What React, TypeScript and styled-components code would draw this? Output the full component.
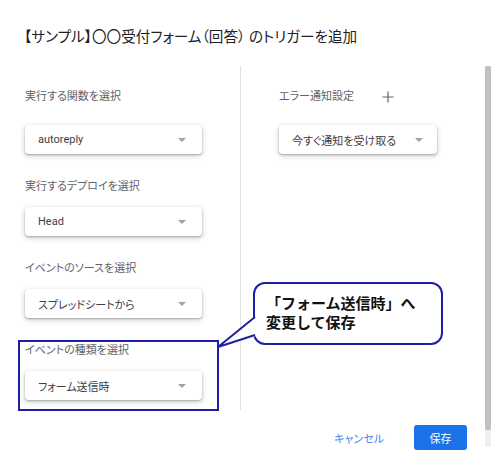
import React from "react";
import styled, { createGlobalStyle } from "styled-components";

const Global = createGlobalStyle`
  html, body { margin: 0; padding: 0; background: #ffffff; }
  body { font-family: Roboto, "Noto Sans CJK JP", sans-serif; }
  * { box-sizing: border-box; }
`;

const Page = styled.div`
  position: relative;
  width: 500px;
  height: 456px;
  overflow: hidden;
  display: flex;
  background: #ffffff;
`;

const Dialog = styled.div`
  width: 485px;
  display: flex;
  flex-direction: column;
`;

const Title = styled.h1`
  margin: 0;
  padding: 27px 0 0 24px;
  font-family: Roboto, "Noto Sans CJK JP", sans-serif;
  font-feature-settings: "palt";
  font-size: 14.6px;
  line-height: 20px;
  font-weight: 400;
  color: #202124;
  white-space: nowrap;
`;

const Body = styled.div`
  display: flex;
  margin-top: 19px;
  height: 344px;
  padding-left: 25px;
`;

const LeftCol = styled.div`
  width: 216px;
  border-right: 1px solid #e3e3e3;
  padding-top: 23px;
  display: flex;
  flex-direction: column;
  gap: 25px;
`;

const RightCol = styled.div`
  padding-left: 38px;
  padding-top: 23px;
  display: flex;
  flex-direction: column;
`;

const Field = styled.div<{ $gap: number }>`
  display: flex;
  flex-direction: column;
  gap: ${(p) => p.$gap}px;
`;

const Label = styled.div`
  font-family: Roboto, "Noto Sans CJK JP", sans-serif;
  font-feature-settings: "palt";
  font-size: 11px;
  line-height: 16px;
  color: #5f6368;
  white-space: nowrap;
`;

const HeaderRow = styled.div`
  display: flex;
  align-items: center;
  justify-content: space-between;
  width: 115px;
  height: 16px;
`;

const Select = styled.div<{ $w: number }>`
  width: ${(p) => p.$w}px;
  height: 29px;
  border-radius: 4px;
  background: #ffffff;
  box-shadow: 0 1px 2px rgba(60, 64, 67, 0.35), 0 2px 5px 1px rgba(60, 64, 67, 0.18);
  display: flex;
  align-items: center;
  justify-content: space-between;
  padding: 0 ${(p) => (p.$w > 170 ? 16 : 14)}px 0 13px;
  font-family: Roboto, "Noto Sans CJK JP", sans-serif;
  font-feature-settings: "palt";
  font-size: 11px;
  color: #3c4043;
  white-space: nowrap;
`;

const Caret = styled.span`
  width: 0;
  height: 0;
  border-left: 4px solid transparent;
  border-right: 4px solid transparent;
  border-top: 4px solid #a0a4a8;
`;

const Footer = styled.div`
  display: flex;
  justify-content: flex-end;
  align-items: center;
  gap: 22px;
  margin-top: 15px;
  padding-right: 18px;
`;

const TextButton = styled.button`
  border: none;
  background: none;
  padding: 0 8px;
  height: 25px;
  font-family: Roboto, "Noto Sans CJK JP", sans-serif;
  font-feature-settings: "palt";
  font-size: 11px;
  color: #4a86f0;
`;

const PrimaryButton = styled.button`
  border: none;
  border-radius: 3px;
  width: 53px;
  height: 25px;
  background: #1a73e8;
  color: #ffffff;
  font-family: Roboto, "Noto Sans CJK JP", sans-serif;
  font-size: 11px;
`;

const ScrollColumn = styled.div`
  width: 6px;
  margin-top: 66px;
  display: flex;
  flex-direction: column;
`;

const Thumb = styled.div`
  height: 364px;
  background: #c1c1c1;
  border-radius: 1px;
`;

const Track = styled.div`
  height: 17px;
  background: #efefef;
`;

const Highlight = styled.div`
  position: absolute;
  left: 18px;
  top: 340px;
  width: 201px;
  height: 71px;
  border: 2px solid #1f1fa6;
`;

const Bubble = styled.div`
  position: absolute;
  left: 253px;
  top: 282px;
  width: 190px;
  height: 63px;
  border: 2px solid #1f1fa6;
  border-radius: 12px;
  background: #ffffff;
  padding: 9px 0 0 11px;
  font-family: "Noto Sans CJK JP", sans-serif;
  font-weight: 700;
  font-size: 15px;
  line-height: 19px;
  color: #111111;
  white-space: nowrap;
`;

const Tail = styled.svg`
  position: absolute;
  left: 214px;
  top: 312px;
  overflow: visible;
`;

const PlusIcon = () => (
  <svg width="12" height="12" viewBox="0 0 12 12">
    <path d="M6 0.5V11.5M0.5 6H11.5" stroke="#5f6368" strokeWidth="1.2" fill="none" />
  </svg>
);

export default function App() {
  return (
    <>
      <Global />
      <Page>
        <Dialog>
          <Title>【サンプル】〇〇受付フォーム（回答） のトリガーを追加</Title>
          <Body>
            <LeftCol>
              <Field $gap={20}>
                <Label>実行する関数を選択</Label>
                <Select $w={177}>
                  autoreply
                  <Caret />
                </Select>
              </Field>
              <Field $gap={12}>
                <Label>実行するデプロイを選択</Label>
                <Select $w={177}>
                  Head
                  <Caret />
                </Select>
              </Field>
              <Field $gap={12}>
                <Label>イベントのソースを選択</Label>
                <Select $w={177}>
                  スプレッドシートから
                  <Caret />
                </Select>
              </Field>
              <Field $gap={12}>
                <Label>イベントの種類を選択</Label>
                <Select $w={177}>
                  フォーム送信時
                  <Caret />
                </Select>
              </Field>
            </LeftCol>
            <RightCol>
              <Field $gap={20}>
                <HeaderRow>
                  <Label>エラー通知設定</Label>
                  <PlusIcon />
                </HeaderRow>
                <Select $w={158}>
                  今すぐ通知を受け取る
                  <Caret />
                </Select>
              </Field>
            </RightCol>
          </Body>
          <Footer>
            <TextButton>キャンセル</TextButton>
            <PrimaryButton>保存</PrimaryButton>
          </Footer>
        </Dialog>
        <ScrollColumn>
          <Thumb />
          <Track />
        </ScrollColumn>
        <Highlight />
        <Bubble>
          「フォーム送信時」へ
          <br />
          変更して保存
        </Bubble>
        <Tail width="44" height="40" viewBox="0 0 44 40">
          <polygon points="42,4 4,35 42,24" fill="#ffffff" />
          <polyline points="41,5 4,35 41,23" fill="none" stroke="#1f1fa6" strokeWidth="2" strokeLinejoin="miter" />
        </Tail>
      </Page>
    </>
  );
}
